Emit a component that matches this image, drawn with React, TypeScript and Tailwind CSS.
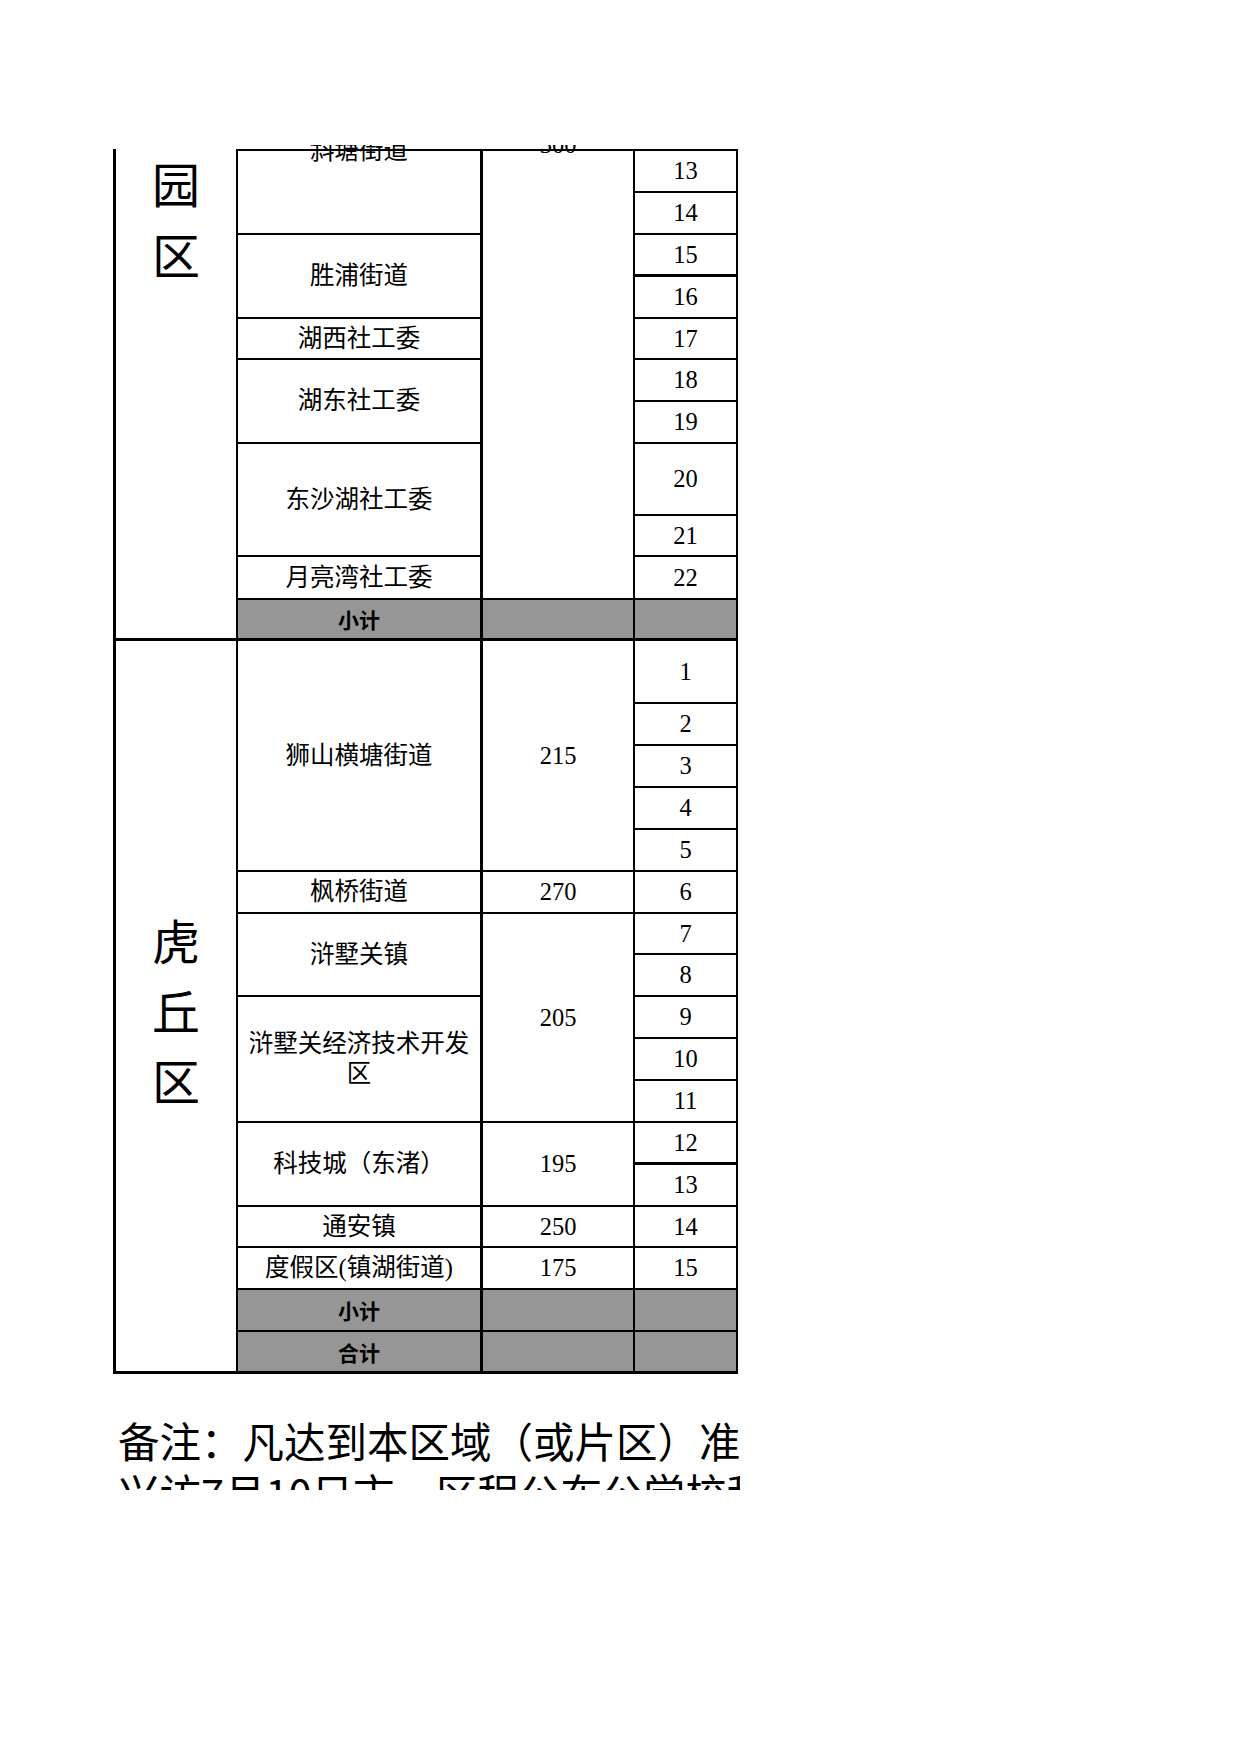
import React from 'react';

type CellProps = { className?: string; children?: React.ReactNode };

// one box of the sheet: right and bottom rule, content centred
const Cell = ({ className = '', children }: CellProps) => (
  <div className={`flex items-center justify-center text-center border-b-2 border-r-2 border-black ${className}`}>
    {children}
  </div>
);

const Sum = ({ label, className = '' }: { label?: string; className?: string }) => (
  <Cell className={`bg-[#969696] font-bold text-[21px] font-['Noto_Sans_CJK_SC',sans-serif] ${className}`}>{label}</Cell>
);

function App() {
  return (
    <div className="w-[1241px] h-[1754px] bg-white text-black">
      <div className="pt-[145px] pl-[113px]">
        <div className="w-[627px] h-[1345px] overflow-hidden">
          <div className="mt-[4px] grid grid-cols-[125px_245px_152px_103px] grid-rows-[44px_42px_42px_42px_41px_42px_42px_72px_41px_43px_41px_63px_42px_42px_42px_42px_42px_41px_42px_42px_42px_42px_42px_42px_41px_42px_42px_42px] text-[24.5px] leading-[30px] font-['Liberation_Serif','Noto_Sans_CJK_SC',serif]">
            {/* 工业园区, continued from the previous page */}
            <Cell className="row-span-11 border-l-[3px] border-b-[3px] items-start text-[48px] leading-[71px] font-['Noto_Sans_CJK_SC',sans-serif]">
              <div className="-mt-[144px]">工<br />业<br />园<br />区</div>
            </Cell>
            <Cell className="row-span-2 border-t-2 border-r-[3px] items-start">
              <div className="-mt-[15px]">斜塘街道</div>
            </Cell>
            <Cell className="row-span-10 border-t-2 items-start">
              <div className="-mt-[21px]">300</div>
            </Cell>
            <Cell className="border-t-2">13</Cell>
            <Cell>14</Cell>

            <Cell className="row-span-2 border-r-[3px]">胜浦街道</Cell>
            <Cell className="border-b-[3px]">15</Cell>
            <Cell>16</Cell>

            <Cell className="border-r-[3px]">湖西社工委</Cell>
            <Cell>17</Cell>

            <Cell className="row-span-2 border-r-[3px]">湖东社工委</Cell>
            <Cell>18</Cell>
            <Cell>19</Cell>

            <Cell className="row-span-2 border-r-[3px]">东沙湖社工委</Cell>
            <Cell>20</Cell>
            <Cell>21</Cell>

            <Cell className="border-r-[3px]">月亮湾社工委</Cell>
            <Cell>22</Cell>

            <Sum label="小计" className="border-r-[3px] border-b-[3px]" />
            <Sum className="border-b-[3px]" />
            <Sum className="border-b-[3px]" />

            {/* 虎丘区 */}
            <Cell className="row-span-17 border-l-[3px] border-b-[3px] text-[48px] leading-[70px] font-['Noto_Sans_CJK_SC',sans-serif]">
              <div className="mt-[6px]">虎<br />丘<br />区</div>
            </Cell>
            <Cell className="row-span-5 border-r-[3px]">狮山横塘街道</Cell>
            <Cell className="row-span-5">215</Cell>
            <Cell>1</Cell>
            <Cell>2</Cell>
            <Cell>3</Cell>
            <Cell>4</Cell>
            <Cell>5</Cell>

            <Cell className="border-r-[3px]">枫桥街道</Cell>
            <Cell>270</Cell>
            <Cell>6</Cell>

            <Cell className="row-span-2 border-r-[3px]">浒墅关镇</Cell>
            <Cell className="row-span-5">205</Cell>
            <Cell>7</Cell>
            <Cell>8</Cell>

            <Cell className="row-span-3 border-r-[3px]">
              <div>浒墅关经济技术开发<br />区</div>
            </Cell>
            <Cell>9</Cell>
            <Cell>10</Cell>
            <Cell>11</Cell>

            <Cell className="row-span-2 border-r-[3px]">科技城（东渚）</Cell>
            <Cell className="row-span-2">195</Cell>
            <Cell className="border-b-[3px]">12</Cell>
            <Cell>13</Cell>

            <Cell className="border-r-[3px]">通安镇</Cell>
            <Cell>250</Cell>
            <Cell>14</Cell>

            <Cell className="border-r-[3px]">度假区(镇湖街道)</Cell>
            <Cell>175</Cell>
            <Cell>15</Cell>

            <Sum label="小计" className="border-r-[3px]" />
            <Sum />
            <Sum />

            <Sum label="合计" className="border-r-[3px] border-b-[3px]" />
            <Sum className="border-b-[3px]" />
            <Sum className="border-b-[3px]" />
          </div>

          <div className="mt-[40px] pl-[5px] text-[41.5px] leading-[52px] whitespace-nowrap font-['Noto_Sans_CJK_SC',sans-serif]">
            <div>备注：凡达到本区域（或片区）准入条件的</div>
            <div>兴访7月10日市，区程公布公学校和</div>
          </div>
        </div>
      </div>
    </div>
  );
}

export default App;
